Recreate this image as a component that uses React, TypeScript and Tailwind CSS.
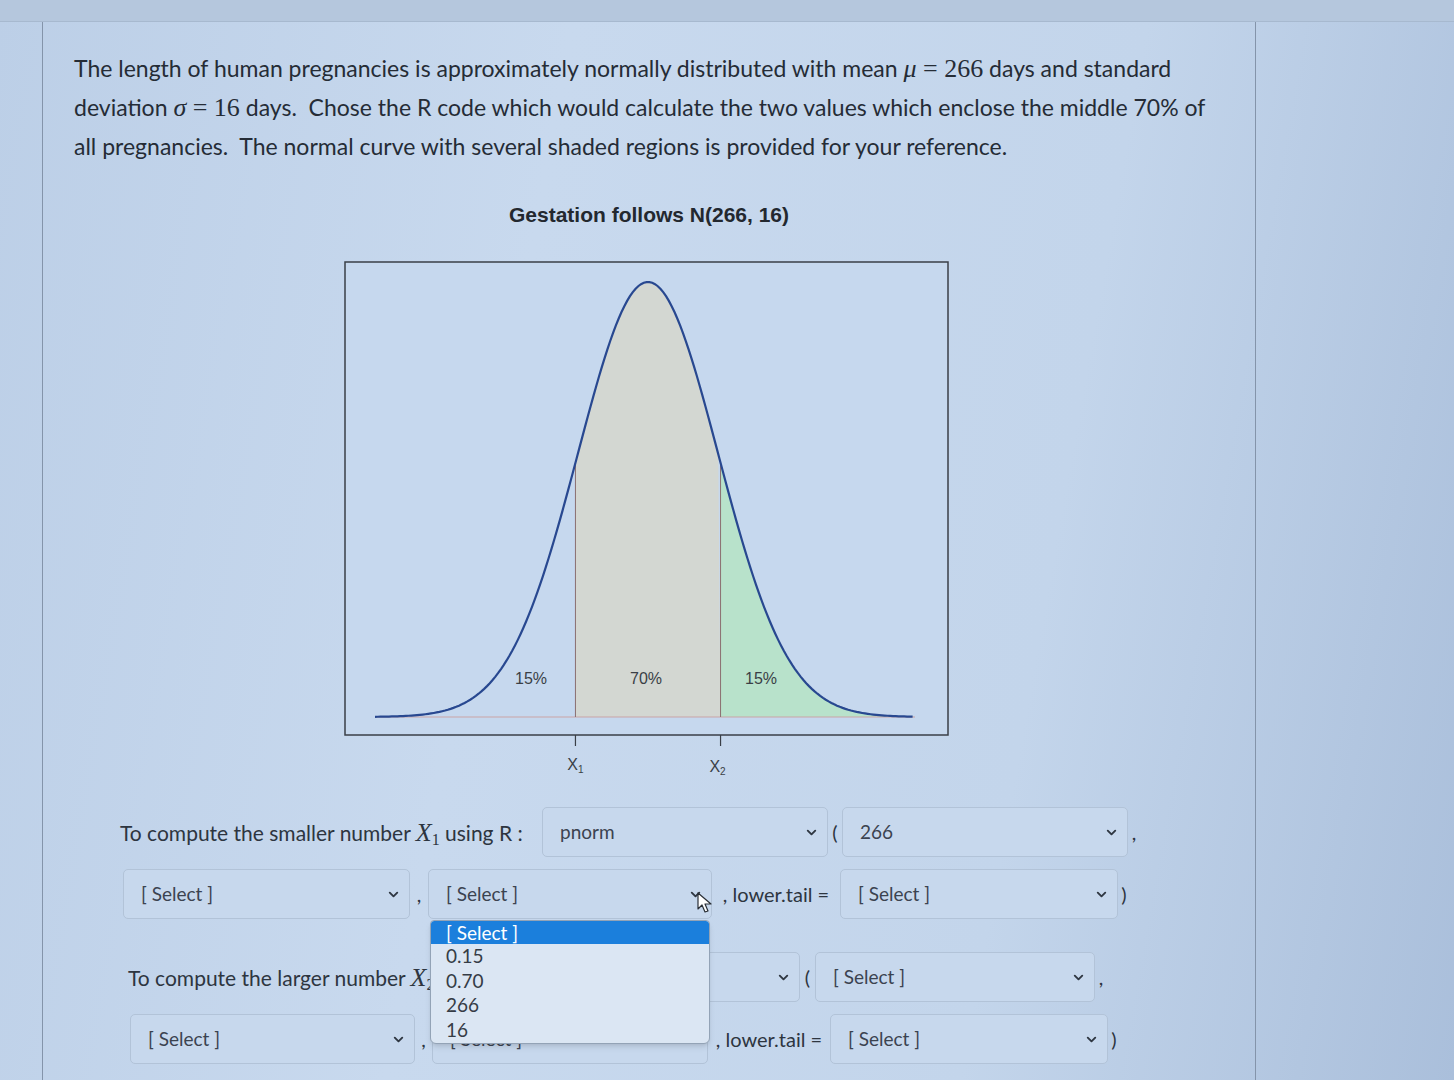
import React from "react";
import { ChevronDown } from "lucide-react";

const MEAN_X = 318;
const SIGMA = 70;
const BASE_Y = 465;
const PEAK = 435;

const curveY = (z: number) => BASE_Y - PEAK * Math.exp((-z * z) / 2);

const buildPath = (from: number, to: number, closed: boolean) => {
  const pts: string[] = [];
  for (let z = from; z <= to + 0.0001; z += 0.04) {
    pts.push(`${(MEAN_X + z * SIGMA).toFixed(2)},${curveY(z).toFixed(2)}`);
  }
  if (!closed) return "M" + pts.join(" L");
  const x0 = (MEAN_X + from * SIGMA).toFixed(2);
  const x1 = (MEAN_X + to * SIGMA).toFixed(2);
  return `M${x0},${BASE_Y} L` + pts.join(" L") + ` L${x1},${BASE_Y} Z`;
};

const Z = 1.0364;

const NormalChart = () => {
  const x1 = MEAN_X - Z * SIGMA;
  const x2 = MEAN_X + Z * SIGMA;
  return (
    <svg width="640" height="530" viewBox="0 0 640 530" className="block">
      <rect x="15" y="10" width="603" height="473" fill="#c6d8ee" stroke="#3a3f47" strokeWidth="1.5" />
      <path d={buildPath(-Z, Z, true)} fill="#d3d7d2" />
      <path d={buildPath(Z, 3.8, true)} fill="#b8e2cb" />
      <line x1="45" y1={BASE_Y} x2="585" y2={BASE_Y} stroke="#c9a3a6" strokeWidth="1.2" />
      <line x1={x1} y1={BASE_Y} x2={x1} y2={curveY(-Z)} stroke="#8b6f70" strokeWidth="1" />
      <line x1={x2} y1={BASE_Y} x2={x2} y2={curveY(Z)} stroke="#8b6f70" strokeWidth="1" />
      <path d={buildPath(-3.9, 3.8, false)} fill="none" stroke="#284890" strokeWidth="2.2" />
      <g fontFamily="'Liberation Sans', Arial, sans-serif" fontSize="16" fill="#3a3f46" textAnchor="middle">
        <text x="201" y="432">15%</text>
        <text x="316" y="432">70%</text>
        <text x="431" y="432">15%</text>
      </g>
      <line x1={x1} y1="483" x2={x1} y2="494" stroke="#3a3f47" strokeWidth="1.2" />
      <line x1={x2} y1="483" x2={x2} y2="494" stroke="#3a3f47" strokeWidth="1.2" />
      <g fontFamily="'Liberation Sans', Arial, sans-serif" fontSize="16" fill="#3a3f46" textAnchor="middle">
        <text x={x1} y="518">
          X<tspan fontSize="10" dy="3">1</tspan>
        </text>
        <text x={x2 - 3} y="520">
          X<tspan fontSize="10" dy="3">2</tspan>
        </text>
      </g>
    </svg>
  );
};

interface SelectBoxProps {
  value: string;
  width: string;
  children?: React.ReactNode;
}

const SelectBox: React.FC<SelectBoxProps> = ({ value, width, children }) => (
  <div
    className={`relative h-[50px] shrink-0 flex items-center justify-between pl-[17px] pr-[8px] rounded-[5px] border border-[#b2c3d8] bg-[#c7d8ed] ${width}`}
  >
    <span className="text-[19px] text-[#3b4350]">{value}</span>
    <ChevronDown size={15} strokeWidth={3} className="text-[#2f3742]" />
    {children}
  </div>
);

const Punct: React.FC<{ text: string; width: string }> = ({ text, width }) => (
  <span className={`shrink-0 text-center text-[20px] text-[#2d3540] ${width}`}>{text}</span>
);

const MathX: React.FC<{ sub: string }> = ({ sub }) => (
  <span className="font-['Liberation_Serif',serif] text-[26px]">
    <i>X</i>
    <span className="text-[16px] relative top-[4px]">{sub}</span>
  </span>
);

const options = ["0.15", "0.70", "266", "16"];

const Dropdown = () => (
  <div className="absolute left-[1px] top-[50px] z-10 w-[280px] h-[124px] rounded-b-[6px] rounded-t-[4px] border border-[#93a3b6] bg-[#dbe6f3] shadow-md overflow-hidden">
    <div className="h-[23px] bg-[#1b7fdc] text-white text-[19px] leading-[23px] pl-[15px] rounded-t-[3px]">[ Select ]</div>
    {options.map((o) => (
      <div key={o} className="h-[24.5px] leading-[24.5px] pl-[15px] text-[19px] text-[#353c46]">
        {o}
      </div>
    ))}
  </div>
);

const Cursor = () => (
  <svg width="16" height="22" viewBox="0 0 16 22" className="absolute left-[268px] top-[22px] z-20">
    <path d="M1 1 L1 17 L5 13 L8 20 L11 19 L8 12 L14 12 Z" fill="#ffffff" stroke="#2a2f36" strokeWidth="1.2" strokeLinejoin="round" />
  </svg>
);

export default function App() {
  return (
    <div className="min-h-screen w-full bg-[linear-gradient(100deg,#bccfe7_0%,#c8d9ee_35%,#c3d5eb_70%,#aabfdb_100%)] font-['Lato',sans-serif] text-[#252c36] overflow-hidden">
      <div className="h-[22px] bg-[#b5c7dd] border-b border-[#a7b9cf]" />
      <div className="flex">
        <div className="w-[42px] shrink-0" />
        <div className="w-[1214px] shrink-0 min-h-[1058px] border-l border-r border-[#8494aa] pt-[27px]">
          <div className="pl-[31px] text-[23px] leading-[38px] whitespace-nowrap">
            <div>
              The length of human pregnancies is approximately normally distributed with mean{" "}
              <span className="font-['Liberation_Serif',serif] text-[26px]">
                <i>μ</i> = 266
              </span>{" "}
              days and standard
            </div>
            <div>
              deviation{" "}
              <span className="font-['Liberation_Serif',serif] text-[26px]">
                <i>σ</i> = 16
              </span>{" "}
              days.&nbsp; Chose the R code which would calculate the two values which enclose the middle 70% of
            </div>
            <div>all pregnancies.&nbsp; The normal curve with several shaded regions is provided for your reference.</div>
          </div>

          <div className="mt-[36px] text-center font-['Liberation_Sans',Arial,sans-serif] font-bold text-[21px] leading-[28px] text-[#23282f]">
            Gestation follows N(266, 16)
          </div>

          <div className="mt-[23px] ml-[287px]">
            <NormalChart />
          </div>

          <div className="mt-[25px] flex flex-col">
            <div className="flex items-center h-[50px] ml-[77px]">
              <span className="w-[422px] shrink-0 whitespace-nowrap text-[21px] text-[#2d3540]">
                To compute the smaller number <MathX sub="1" /> using R :
              </span>
              <SelectBox value="pnorm" width="w-[286px]" />
              <Punct text="(" width="w-[14px]" />
              <SelectBox value="266" width="w-[286px]" />
              <Punct text="," width="w-[12px]" />
            </div>

            <div className="flex items-center h-[50px] ml-[80px] mt-[12px]">
              <SelectBox value="[ Select ]" width="w-[287px]" />
              <Punct text="," width="w-[18px]" />
              <SelectBox value="[ Select ]" width="w-[284px]">
                <Dropdown />
                <Cursor />
              </SelectBox>
              <Punct text=", lower.tail =" width="w-[128px]" />
              <SelectBox value="[ Select ]" width="w-[278px]" />
              <Punct text=")" width="w-[12px]" />
            </div>

            <div className="flex items-center h-[50px] ml-[85px] mt-[33px]">
              <span className="w-[420px] shrink-0 whitespace-nowrap text-[21px] text-[#2d3540]">
                To compute the larger number <MathX sub="2" /> using R :
              </span>
              <SelectBox value="pnorm" width="w-[252px]" />
              <Punct text="(" width="w-[15px]" />
              <SelectBox value="[ Select ]" width="w-[280px]" />
              <Punct text="," width="w-[12px]" />
            </div>

            <div className="flex items-center h-[50px] ml-[87px] mt-[12px]">
              <SelectBox value="[ Select ]" width="w-[285px]" />
              <Punct text="," width="w-[17px]" />
              <SelectBox value="[ Select ]" width="w-[276px]" />
              <Punct text=", lower.tail =" width="w-[122px]" />
              <SelectBox value="[ Select ]" width="w-[278px]" />
              <Punct text=")" width="w-[12px]" />
            </div>
          </div>
        </div>
      </div>
    </div>
  );
}
